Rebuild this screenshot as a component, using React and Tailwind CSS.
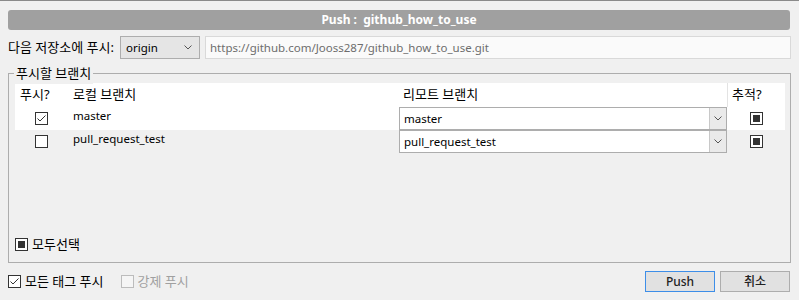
const FONT = "font-['Noto_Sans','Noto_Sans_CJK_KR',sans-serif]"

function Check({ state = 'off', disabled = false }) {
  return (
    <span
      className={`flex h-[13px] w-[13px] shrink-0 items-center justify-center border ${
        disabled ? 'border-[#bcbcbc] bg-[#f5f5f5]' : 'border-[#333333] bg-white'
      }`}
    >
      {state === 'on' && (
        <svg width="11" height="11" viewBox="0 0 11 11">
          <path d="M1.5 5.5 L4 8 L9.5 2.5" fill="none" stroke="#333" strokeWidth="1" />
        </svg>
      )}
      {state === 'mixed' && <span className="h-[7px] w-[7px] bg-[#333333]" />}
    </span>
  )
}

function Chevron() {
  return (
    <svg width="8" height="5" viewBox="0 0 8 5">
      <path d="M0.5 0.5 L4 4 L7.5 0.5" fill="none" stroke="#555" strokeWidth="1" />
    </svg>
  )
}

function BranchCombo({ value }) {
  return (
    <div className="flex h-full w-[328px] border border-[#adadad] bg-white">
      <span className="flex-1 pl-[4px] leading-[21px]">{value}</span>
      <span className="flex w-[17px] items-center justify-center border-l border-[#c8c8c8] bg-[#eaeaea]">
        <Chevron />
      </span>
    </div>
  )
}

const rows = [
  { name: 'master', push: 'on', bg: 'bg-white' },
  { name: 'pull_request_test', push: 'off', bg: 'bg-[#f0f0f0]' },
]

export default function App() {
  return (
    <div className={`h-[300px] w-[799px] overflow-hidden bg-[#f0f0f0] text-[11.5px] text-black ${FONT}`}>
      <div className="h-px bg-[#8a8a8a]" />
      <div className="px-[8px] pt-[9px]">
        <div className="mr-[1px] h-[20px] whitespace-pre rounded-[3px] bg-[#a0a0a0] text-center text-[12px] font-bold leading-[20px] text-white">
          Push :  github_how_to_use
        </div>

        <div className="mt-[6px] flex h-[23px] items-stretch">
          <span className="w-[112px] text-[13px] leading-[23px]">다음 저장소에 푸시:</span>
          <div className="flex w-[80px] items-center justify-between border border-[#adadad] bg-[#e5e5e5] pl-[5px] pr-[7px]">
            <span>origin</span>
            <Chevron />
          </div>
          <div className="ml-[5px] flex-1 border border-[#d9d9d9] bg-[#fafafa] pl-[4px] leading-[21px] text-[#6d6d6d]">
            https://github.com/Jooss287/github_how_to_use.git
          </div>
        </div>

        <div className="relative mt-[14px] flex h-[190px] flex-col border border-[#adadad] pl-[6px] pr-[5px] pt-[9px]">
          <span className="absolute -top-[10px] left-[5px] bg-[#f0f0f0] px-[2px] text-[13px]">푸시할 브랜치</span>

          <div className="flex h-[24px] bg-white text-[13px] leading-[22px]">
            <span className="w-[52px] pl-[5px]">푸시?</span>
            <span className="w-[331px] pl-[6px]">로컬 브랜치</span>
            <span className="w-[329px] pl-[5px]">리모트 브랜치</span>
            <span className="flex-1 border-l border-[#e3e3e3] pl-[4px]">추적?</span>
          </div>

          {rows.map((r) => (
            <div key={r.name} className={`flex h-[23px] ${r.bg}`}>
              <span className="flex w-[52px] items-center justify-center pl-[1px]">
                <Check state={r.push} />
              </span>
              <span className="w-[331px] pl-[6px] leading-[17px]">{r.name}</span>
              <span className="w-[329px] pl-[1px]">
                <BranchCombo value={r.name} />
              </span>
              <span className="flex flex-1 items-center justify-center pb-[1px]">
                <Check state="mixed" />
              </span>
            </div>
          ))}

          <div className="mb-[8px] mt-auto flex items-center gap-[4px]">
            <Check state="mixed" />
            <span className="text-[13px]">모두선택</span>
          </div>
        </div>

        <div className="mt-[8px] flex h-[21px] items-center text-[13px]">
          <Check state="on" />
          <span className="ml-[4px]">모든 태그 푸시</span>
          <span className="ml-[17px]">
            <Check disabled />
          </span>
          <span className="ml-[4px] text-[#a0a0a0]">강제 푸시</span>
          <div className="ml-auto mr-[1px] flex h-full gap-[5px] text-[12px]">
            <button className="h-full w-[70px] border border-[#3d8ee8] bg-[#e1e1e1] font-medium text-[#222]">
              Push
            </button>
            <button className="h-full w-[70px] border border-[#adadad] bg-[#e1e1e1] font-medium text-[#222]">
              취소
            </button>
          </div>
        </div>
      </div>
    </div>
  )
}
